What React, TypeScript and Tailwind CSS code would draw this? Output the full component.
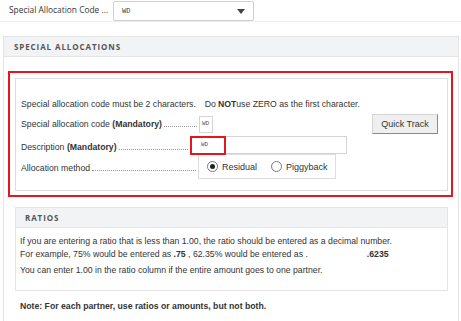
import React from 'react'

const body = "font-['Liberation_Sans',Arial,sans-serif]"
const ui = "font-['Open_Sans','Liberation_Sans',sans-serif]"

function Leader() {
  return <span className="flex-1 self-end mb-[3px] mx-[2px] border-b border-dotted border-[#9a9a9a]" />
}

function Radio({ checked, label }: { checked?: boolean; label: string }) {
  return (
    <label className="flex items-center gap-[4px]">
      <span className="w-[11px] h-[11px] rounded-full border border-[#777] bg-white flex items-center justify-center">
        {checked && <span className="w-[5px] h-[5px] rounded-full bg-[#222]" />}
      </span>
      <span>{label}</span>
    </label>
  )
}

export default function App() {
  return (
    <div className={`w-[461px] h-[321px] overflow-hidden bg-white text-[#333] ${body}`}>
      {/* top selector */}
      <div className="h-[22px] border-b border-[#ececec] flex items-center">
        <span className={`ml-[9px] w-[104px] text-[8.4px] text-[#333] ${ui} whitespace-nowrap`}>
          Special Allocation Code ...
        </span>
        <div className="w-[141px] h-[20px] mt-[1px] border border-[#cfcfcf] rounded-[2px] bg-white flex items-center justify-between pl-[8px] pr-[8px]">
          <span className="text-[7px] font-['Liberation_Mono',monospace] text-[#444]">WD</span>
          <svg width="8" height="5" viewBox="0 0 8 5">
            <path d="M0 0 L8 0 L4 5 Z" fill="#444" />
          </svg>
        </div>
      </div>

      {/* special allocations panel */}
      <div className="mt-[14px] ml-[3px] w-[456px] h-[300px] border border-[#e4e4e4]">
        <div className={`h-[20px] bg-[#f2f3f5] border-b border-[#e4e4e4] flex items-center pl-[10px] text-[8px] font-bold tracking-[0.9px] text-[#555] ${ui}`}>
          SPECIAL ALLOCATIONS
        </div>

        <div className="pt-[14px] pl-[4px]">
          <div className="w-[445px] h-[126px] border-2 border-[#e5161d] p-[5px]">
            <div className="w-[433px] h-[113px] border border-[#dedede] pl-[5px] pt-[19px] text-[8.7px] leading-[12px]">
              <div className="flex">
                <span>Special allocation code must be 2 characters.</span>
                <span className="ml-[9px]">Do </span>
                <span className="ml-[2px] font-bold">NOT</span>
                <span>use ZERO as the first character.</span>
              </div>

              <div className="mt-[4px] h-[20px] flex items-center">
                <div className="w-[178px] flex whitespace-nowrap">
                  <span>
                    Special allocation code <b>(Mandatory)</b>
                  </span>
                  <Leader />
                </div>
                <div className="w-[14px] h-[17px] border border-[#d4d4d4] flex items-center pl-[2px] text-[6px] font-['Liberation_Mono',monospace] text-[#555]">
                  WD
                </div>
                <button className="ml-auto mr-[9px] w-[66px] h-[20px] bg-[#efefef] border border-[#d6d6d6] border-r-[#8a8a8a] border-b-[#8a8a8a] text-[9px] text-[#333]">
                  Quick Track
                </button>
              </div>

              <div className="mt-[2px] h-[18px] flex items-center">
                <div className="w-[169px] flex whitespace-nowrap pt-[3px]">
                  <span>
                    Description <b>(Mandatory)</b>
                  </span>
                  <Leader />
                </div>
                <div className="relative w-[157px] h-[18px] border border-[#d4d4d4] flex items-center pl-[10px] text-[6px] font-['Liberation_Mono',monospace] text-[#555]">
                  WD
                  <span className="absolute left-[-1px] top-[-1px] w-[36px] h-[19px] border-2 border-[#e5161d]" />
                </div>
              </div>

              <div className="h-[25px] flex items-center">
                <div className="w-[177px] flex whitespace-nowrap pt-[2px]">
                  <span>Allocation method</span>
                  <Leader />
                </div>
                <div className="w-[138px] h-[25px] border border-[#dedede] flex items-center gap-[14px] pl-[8px] text-[9px]">
                  <Radio checked label="Residual" />
                  <Radio label="Piggyback" />
                </div>
              </div>
            </div>
          </div>

          {/* ratios */}
          <div className="mt-[10px] ml-[7px] w-[433px] h-[84px] border border-[#e4e4e4]">
            <div className={`h-[20px] bg-[#f2f3f5] border-b border-[#e4e4e4] flex items-center pl-[9px] text-[8px] font-bold tracking-[0.9px] text-[#555] ${ui}`}>
              RATIOS
            </div>
            <div className="pl-[4px] pt-[7px] text-[8.7px] leading-[13px]">
              <p>If you are entering a ratio that is less than 1.00, the ratio should be entered as a decimal number.</p>
              <p>
                For example, 75% would be entered as <b>.75</b> , 62.35% would be entered as .
                <b className="ml-[59px]">.6235</b>
              </p>
              <p className="mt-[3px]">You can enter 1.00 in the ratio column if the entire amount goes to one partner.</p>
            </div>
          </div>

          <p className="mt-[9px] ml-[12px] text-[8.7px] font-bold leading-[12px]">
            Note: For each partner, use ratios or amounts, but not both.
          </p>
        </div>
      </div>
    </div>
  )
}
